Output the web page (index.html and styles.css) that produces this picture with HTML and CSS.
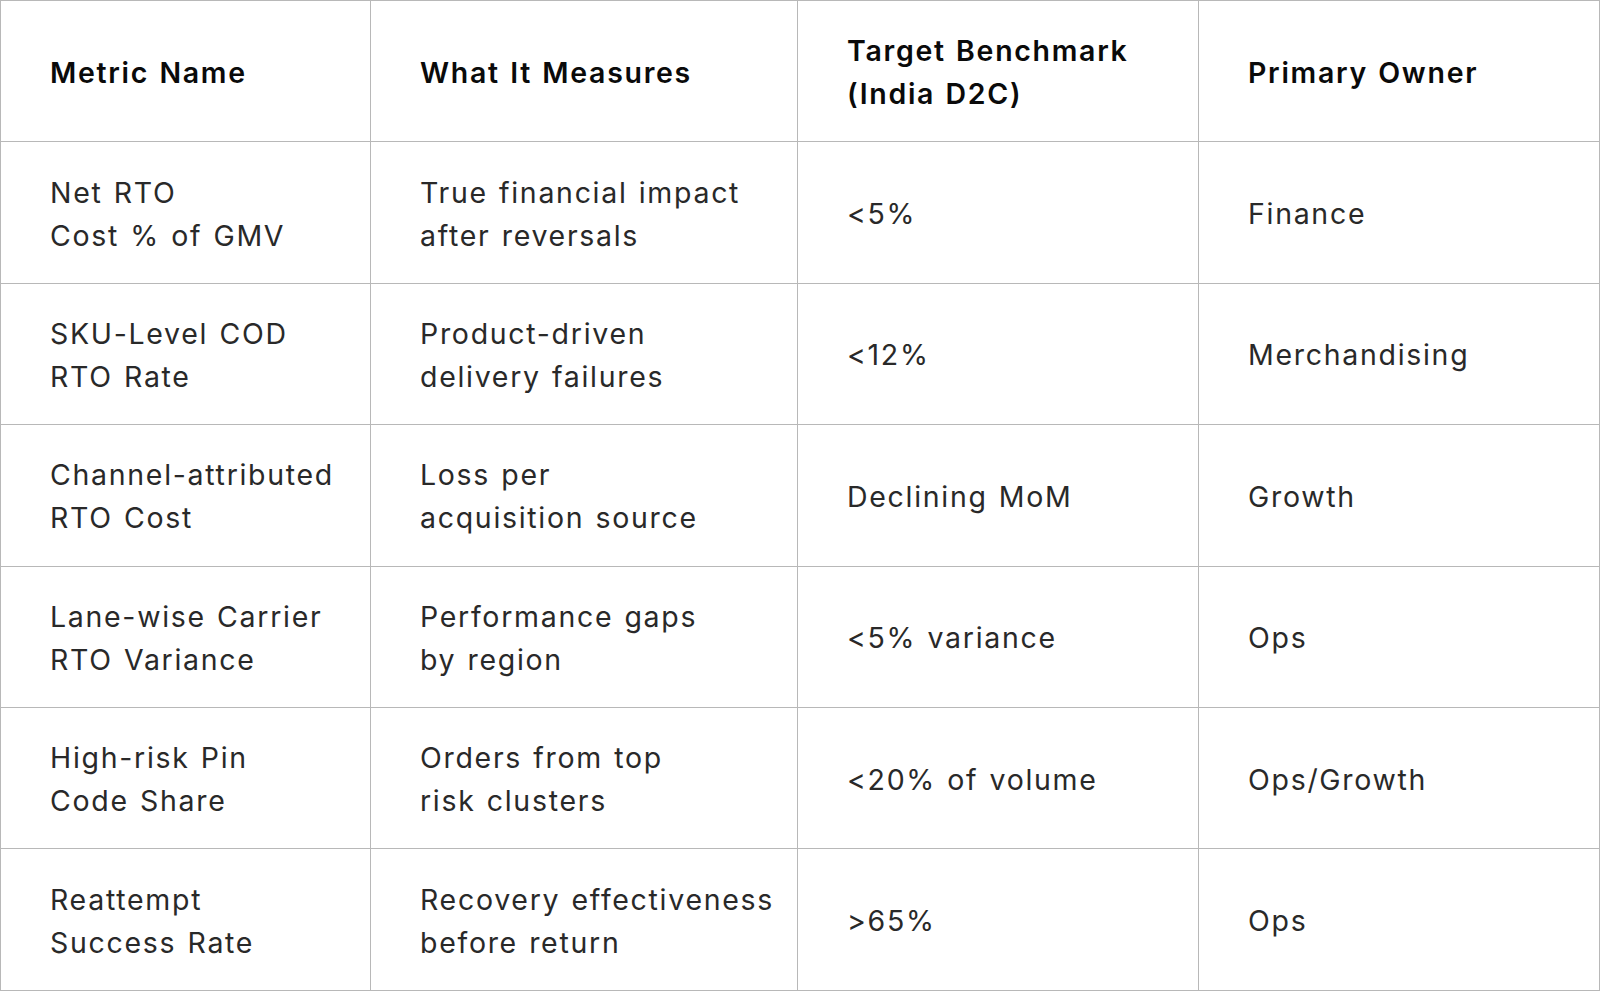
FILE: index.html
```html
<!DOCTYPE html>
<html lang="en">
<head>
<meta charset="utf-8">
<title>RTO Metrics</title>
<link rel="stylesheet" href="styles.css">
</head>
<body>
<table class="metrics">
  <colgroup>
    <col class="c1"><col class="c2"><col class="c3"><col class="c4">
  </colgroup>
  <thead>
    <tr>
      <th>Metric Name</th>
      <th>What It Measures</th>
      <th>Target Benchmark<br>(India D2C)</th>
      <th>Primary Owner</th>
    </tr>
  </thead>
  <tbody>
    <tr>
      <td>Net RTO<br>Cost % of GMV</td>
      <td>True financial impact<br>after reversals</td>
      <td>&lt;5%</td>
      <td>Finance</td>
    </tr>
    <tr>
      <td>SKU-Level COD<br>RTO Rate</td>
      <td>Product-driven<br>delivery failures</td>
      <td>&lt;12%</td>
      <td>Merchandising</td>
    </tr>
    <tr>
      <td>Channel-attributed<br>RTO Cost</td>
      <td>Loss per<br>acquisition source</td>
      <td>Declining MoM</td>
      <td>Growth</td>
    </tr>
    <tr>
      <td>Lane-wise Carrier<br>RTO Variance</td>
      <td>Performance gaps<br>by region</td>
      <td>&lt;5% variance</td>
      <td>Ops</td>
    </tr>
    <tr>
      <td>High-risk Pin<br>Code Share</td>
      <td>Orders from top<br>risk clusters</td>
      <td>&lt;20% of volume</td>
      <td>Ops/Growth</td>
    </tr>
    <tr>
      <td>Reattempt<br>Success Rate</td>
      <td>Recovery effectiveness<br>before return</td>
      <td>&gt;65%</td>
      <td>Ops</td>
    </tr>
  </tbody>
</table>
</body>
</html>
```
FILE: styles.css
```css
html, body {
  margin: 0;
  padding: 0;
  background: #ffffff;
}
body {
  font-family: "Inter", "Lato", "Liberation Sans", sans-serif;
}
.metrics {
  width: 1599px;
  border-collapse: collapse;
  table-layout: fixed;
}
.c1 { width: 370px; }
.c2 { width: 427px; }
.c3 { width: 401px; }
.c4 { width: 401px; }
.metrics th,
.metrics td {
  border: 1px solid #b8b8b8;
  height: 138.4px;
  padding: 2px 8px 0 49px;
  text-align: left;
  vertical-align: middle;
  font-size: 28.5px;
  line-height: 43px;
  letter-spacing: 1.7px;
  word-spacing: 1.5px;
  white-space: nowrap;
}
.metrics th {
  font-weight: 600;
  color: #0a0a0a;
}
.metrics td {
  font-weight: 400;
  color: #292929;
}
```
